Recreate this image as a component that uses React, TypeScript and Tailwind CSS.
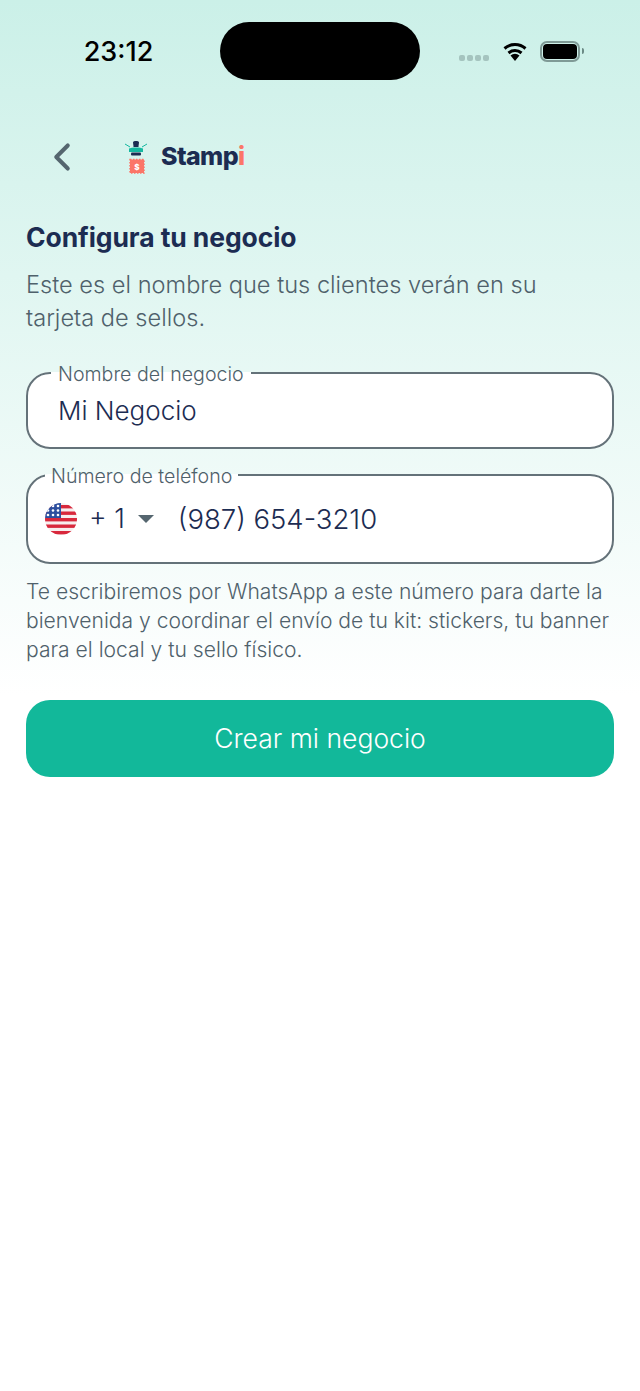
import React from 'react';
import { ChevronLeft } from 'lucide-react';

function StampLogo() {
  return (
    <svg width="26" height="34" viewBox="0 0 26 34" fill="none">
      <path d="M2 4l5 3M24 4l-5 3" stroke="#14b8a0" strokeWidth="1" />
      <path d="M10 2.500c0-1 1-1.500 3-1.500s3 .5 3 1.500S15.500 5 15.500 7h-5c0-2-.5-3.500-.5-4.500z" fill="#1c2c52" />
      <path d="M6 8.500c2-1.500 12-1.500 14 0v3.500H6z" fill="#14b8a0" />
      <rect x="8" y="12.500" width="10" height="3" rx="1" fill="#1c2c52" />
      <rect x="7" y="19.500" width="14" height="13.500" fill="#fb7668" stroke="#fb7668" strokeWidth="1.500" strokeDasharray="1.500 1.500" />
      <text x="14" y="29.500" fontSize="8" fontWeight="800" fill="#ffffff" textAnchor="middle" fontFamily="Inter, sans-serif">$</text>
    </svg>
  );
}

function UsFlag() {
  return (
    <svg width="32" height="32" viewBox="0 0 32 32">
      <defs>
        <clipPath id="flag-clip">
          <circle cx="16" cy="16" r="16" />
        </clipPath>
      </defs>
      <g clipPath="url(#flag-clip)">
        <rect width="32" height="32" fill="#f7eeee" />
        {[2, 8.5, 15, 21.5, 28].map((y) => (
          <rect key={y} y={y} width="32" height="3.400" fill="#d8283c" />
        ))}
        <rect width="16" height="15" fill="#2d4f9e" />
        {[3, 8, 13].map((x) =>
          [3, 7.500, 12].map((y) => <circle key={`${x}-${y}`} cx={x} cy={y} r="1.300" fill="#ffffff" />)
        )}
      </g>
    </svg>
  );
}

export default function App() {
  return (
    <div className="min-h-[1391px] bg-gradient-to-b from-[#cbf0e8] from-0% to-white to-[50%] font-['Inter',sans-serif]">
      {/* Status bar */}
      <div className="flex items-center h-[58px] pt-[22px] box-content">
        <div className="w-[220px] flex justify-center pl-[17px] pt-[2px] text-[27px] font-medium text-black">23:12</div>
        <div className="w-[200px] h-[58px] rounded-[29px] bg-black" />
        <div className="flex items-center pl-[39px]">
          <div className="flex gap-[2px] mt-[14px]">
            <span className="w-[6px] h-[6px] rounded-[2px] bg-[#a5c4bf]" />
            <span className="w-[6px] h-[6px] rounded-[2px] bg-[#a5c4bf]" />
            <span className="w-[6px] h-[6px] rounded-[2px] bg-[#a5c4bf]" />
            <span className="w-[6px] h-[6px] rounded-[2px] bg-[#a5c4bf]" />
          </div>
          <svg className="ml-[12px]" width="28" height="20" viewBox="0 0 28 20">
            <path d="M14 20l-4.500-5.500a7 7 0 0 1 9 0z" fill="#000000" />
            <path d="M7.500 12a10 10 0 0 1 13 0" stroke="#000000" strokeWidth="3" fill="none" />
            <path d="M3.500 7.500a16 16 0 0 1 21 0" stroke="#000000" strokeWidth="3" fill="none" />
          </svg>
          <div className="ml-[11px] w-[40px] h-[21px] rounded-[7px] border-2 border-[#7f9a96] p-[1px]">
            <div className="w-full h-full rounded-[4px] bg-black" />
          </div>
          <span className="ml-[2px] w-[2px] h-[6px] rounded-r-sm bg-[#6b8a85]" />
        </div>
      </div>

      {/* Header */}
      <div className="flex items-center mt-[60px] h-[34px]">
        <ChevronLeft className="ml-[39px] text-[#55666f]" size={46} strokeWidth={2.1} />
        <div className="ml-[38px]">
          <StampLogo />
        </div>
        <span className="ml-[12px] text-[25px] font-extrabold tracking-[-0.6px] text-[#1c2c52]">
          Stamp<span className="text-[#fb7668]">i</span>
        </span>
      </div>

      <div className="px-[26px]">
        <h1 className="mt-[46px] text-[26.5px] leading-[34px] font-bold tracking-[-0.1px] text-[#1c2c52]">Configura tu negocio</h1>
        <p className="mt-[14px] text-[23.6px] leading-[33px] font-light text-[#4f616b]">
          Este es el nombre que tus clientes verán en su
          <br />
          tarjeta de sellos.
        </p>

        <fieldset className="mt-[27px] h-[88px] rounded-[24px] border-2 border-[#647279] bg-white">
          <legend className="ml-[23px] px-[7px] pt-[2px] text-[19.6px] leading-[22px] font-light text-[#4f616b]">Nombre del negocio</legend>
          <div className="pl-[30px] pt-[8px] text-[26px] leading-[36px] font-light text-[#1c2c52]">Mi Negocio</div>
        </fieldset>

        <fieldset className="mt-[14px] h-[101px] rounded-[24px] border-2 border-[#647279] bg-white">
          <legend className="ml-[17px] px-[6px] pt-[2px] text-[19.6px] leading-[22px] font-light text-[#4f616b]">Número de teléfono</legend>
          <div className="flex items-center pl-[17px] pt-[14px] text-[27px] leading-[36px] font-light text-[#1c2c52]">
            <UsFlag />
            <span className="ml-[12px]">+ 1</span>
            <span className="ml-[13px] w-0 h-0 border-x-[8px] border-x-transparent border-t-[8px] border-t-[#55666f]" />
            <span className="ml-[24px] text-[27.5px]">(987) 654-3210</span>
          </div>
        </fieldset>

        <p className="mt-[13px] whitespace-nowrap text-[21.1px] leading-[29px] font-light text-[#4f616b]">
          Te escribiremos por WhatsApp a este número para darte la
          <br />
          bienvenida y coordinar el envío de tu kit: stickers, tu banner
          <br />
          para el local y tu sello físico.
        </p>

        <button className="mt-[36px] w-full h-[77px] rounded-[24px] bg-[#12b89a] text-[26.5px] font-light text-white">Crear mi negocio</button>
      </div>
    </div>
  );
}
